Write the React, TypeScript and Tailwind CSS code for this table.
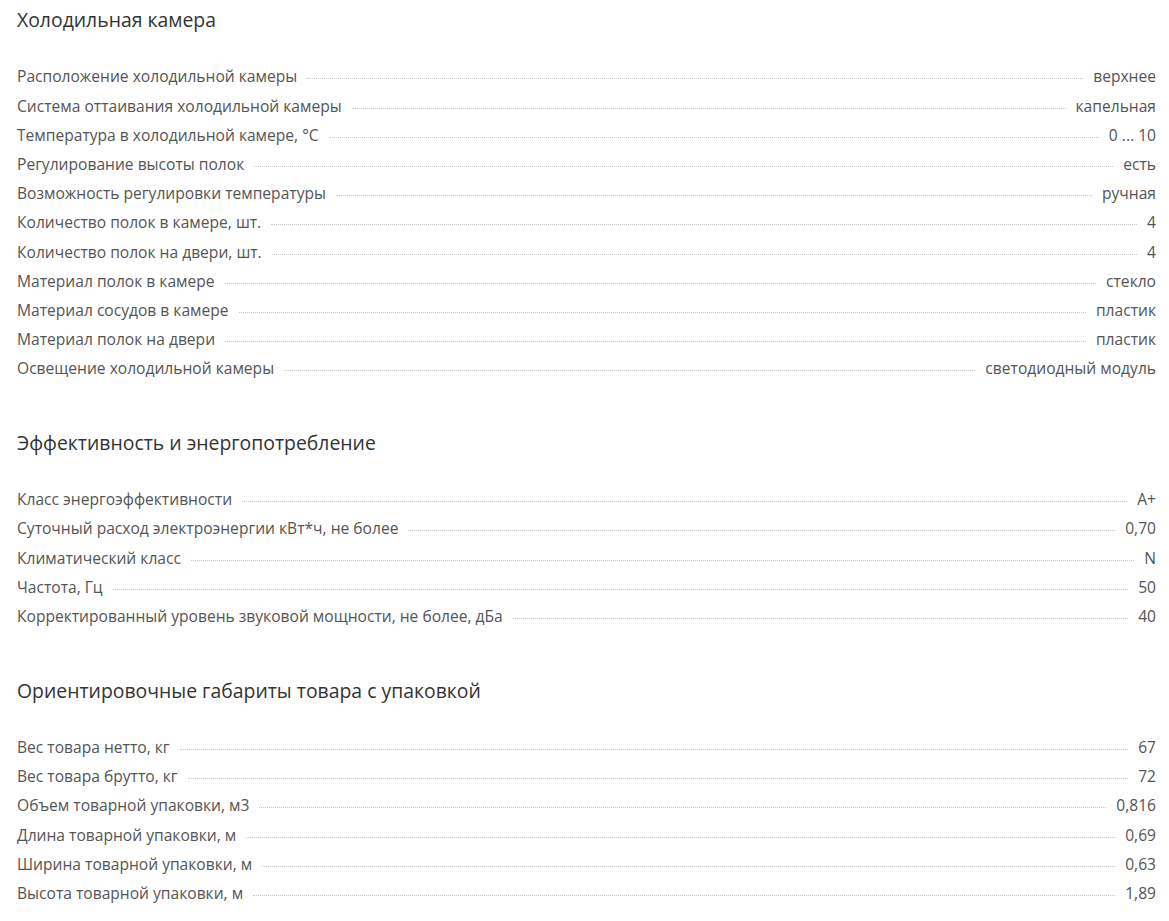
import React from 'react';

type Row = [string, string];

const sections: { title: string; rows: Row[] }[] = [
  {
    title: 'Холодильная камера',
    rows: [
      ['Расположение холодильной камеры', 'верхнее'],
      ['Система оттаивания холодильной камеры', 'капельная'],
      ['Температура в холодильной камере, °C', '0 ... 10'],
      ['Регулирование высоты полок', 'есть'],
      ['Возможность регулировки температуры', 'ручная'],
      ['Количество полок в камере, шт.', '4'],
      ['Количество полок на двери, шт.', '4'],
      ['Материал полок в камере', 'стекло'],
      ['Материал сосудов в камере', 'пластик'],
      ['Материал полок на двери', 'пластик'],
      ['Освещение холодильной камеры', 'светодиодный модуль'],
    ],
  },
  {
    title: 'Эффективность и энергопотребление',
    rows: [
      ['Класс энергоэффективности', 'A+'],
      ['Суточный расход электроэнергии кВт*ч, не более', '0,70'],
      ['Климатический класс', 'N'],
      ['Частота, Гц', '50'],
      ['Корректированный уровень звуковой мощности, не более, дБа', '40'],
    ],
  },
  {
    title: 'Ориентировочные габариты товара с упаковкой',
    rows: [
      ['Вес товара нетто, кг', '67'],
      ['Вес товара брутто, кг', '72'],
      ['Объем товарной упаковки, м3', '0,816'],
      ['Длина товарной упаковки, м', '0,69'],
      ['Ширина товарной упаковки, м', '0,63'],
      ['Высота товарной упаковки, м', '1,89'],
    ],
  },
];

const SpecRow: React.FC<{ label: string; value: string }> = ({ label, value }) => (
  <div className="flex items-baseline h-[29.2px] leading-[29.2px] text-[15.6px] text-[#555]">
    <span className="whitespace-nowrap">{label}</span>
    <span className="flex-1 mx-[10px] border-b border-dotted border-[#c8c8c8] translate-y-[-3px]" />
    <span className="whitespace-nowrap">{value}</span>
  </div>
);

const App: React.FC = () => {
  return (
    <div className="bg-white min-h-screen pl-[17px] pr-[13px] pt-2" style={{ fontFamily: '"Open Sans", "Liberation Sans", sans-serif' }}>
      {sections.map((s, i) => (
        <section key={s.title} className={i > 0 ? 'mt-[47.4px]' : ''}>
          <h2 className="h-6 leading-6 text-[19.4px] text-[#333] font-normal">{s.title}</h2>
          <div className="mt-[30.4px]">
            {s.rows.map(([l, v]) => (
              <SpecRow key={l} label={l} value={v} />
            ))}
          </div>
        </section>
      ))}
    </div>
  );
};

export default App;
